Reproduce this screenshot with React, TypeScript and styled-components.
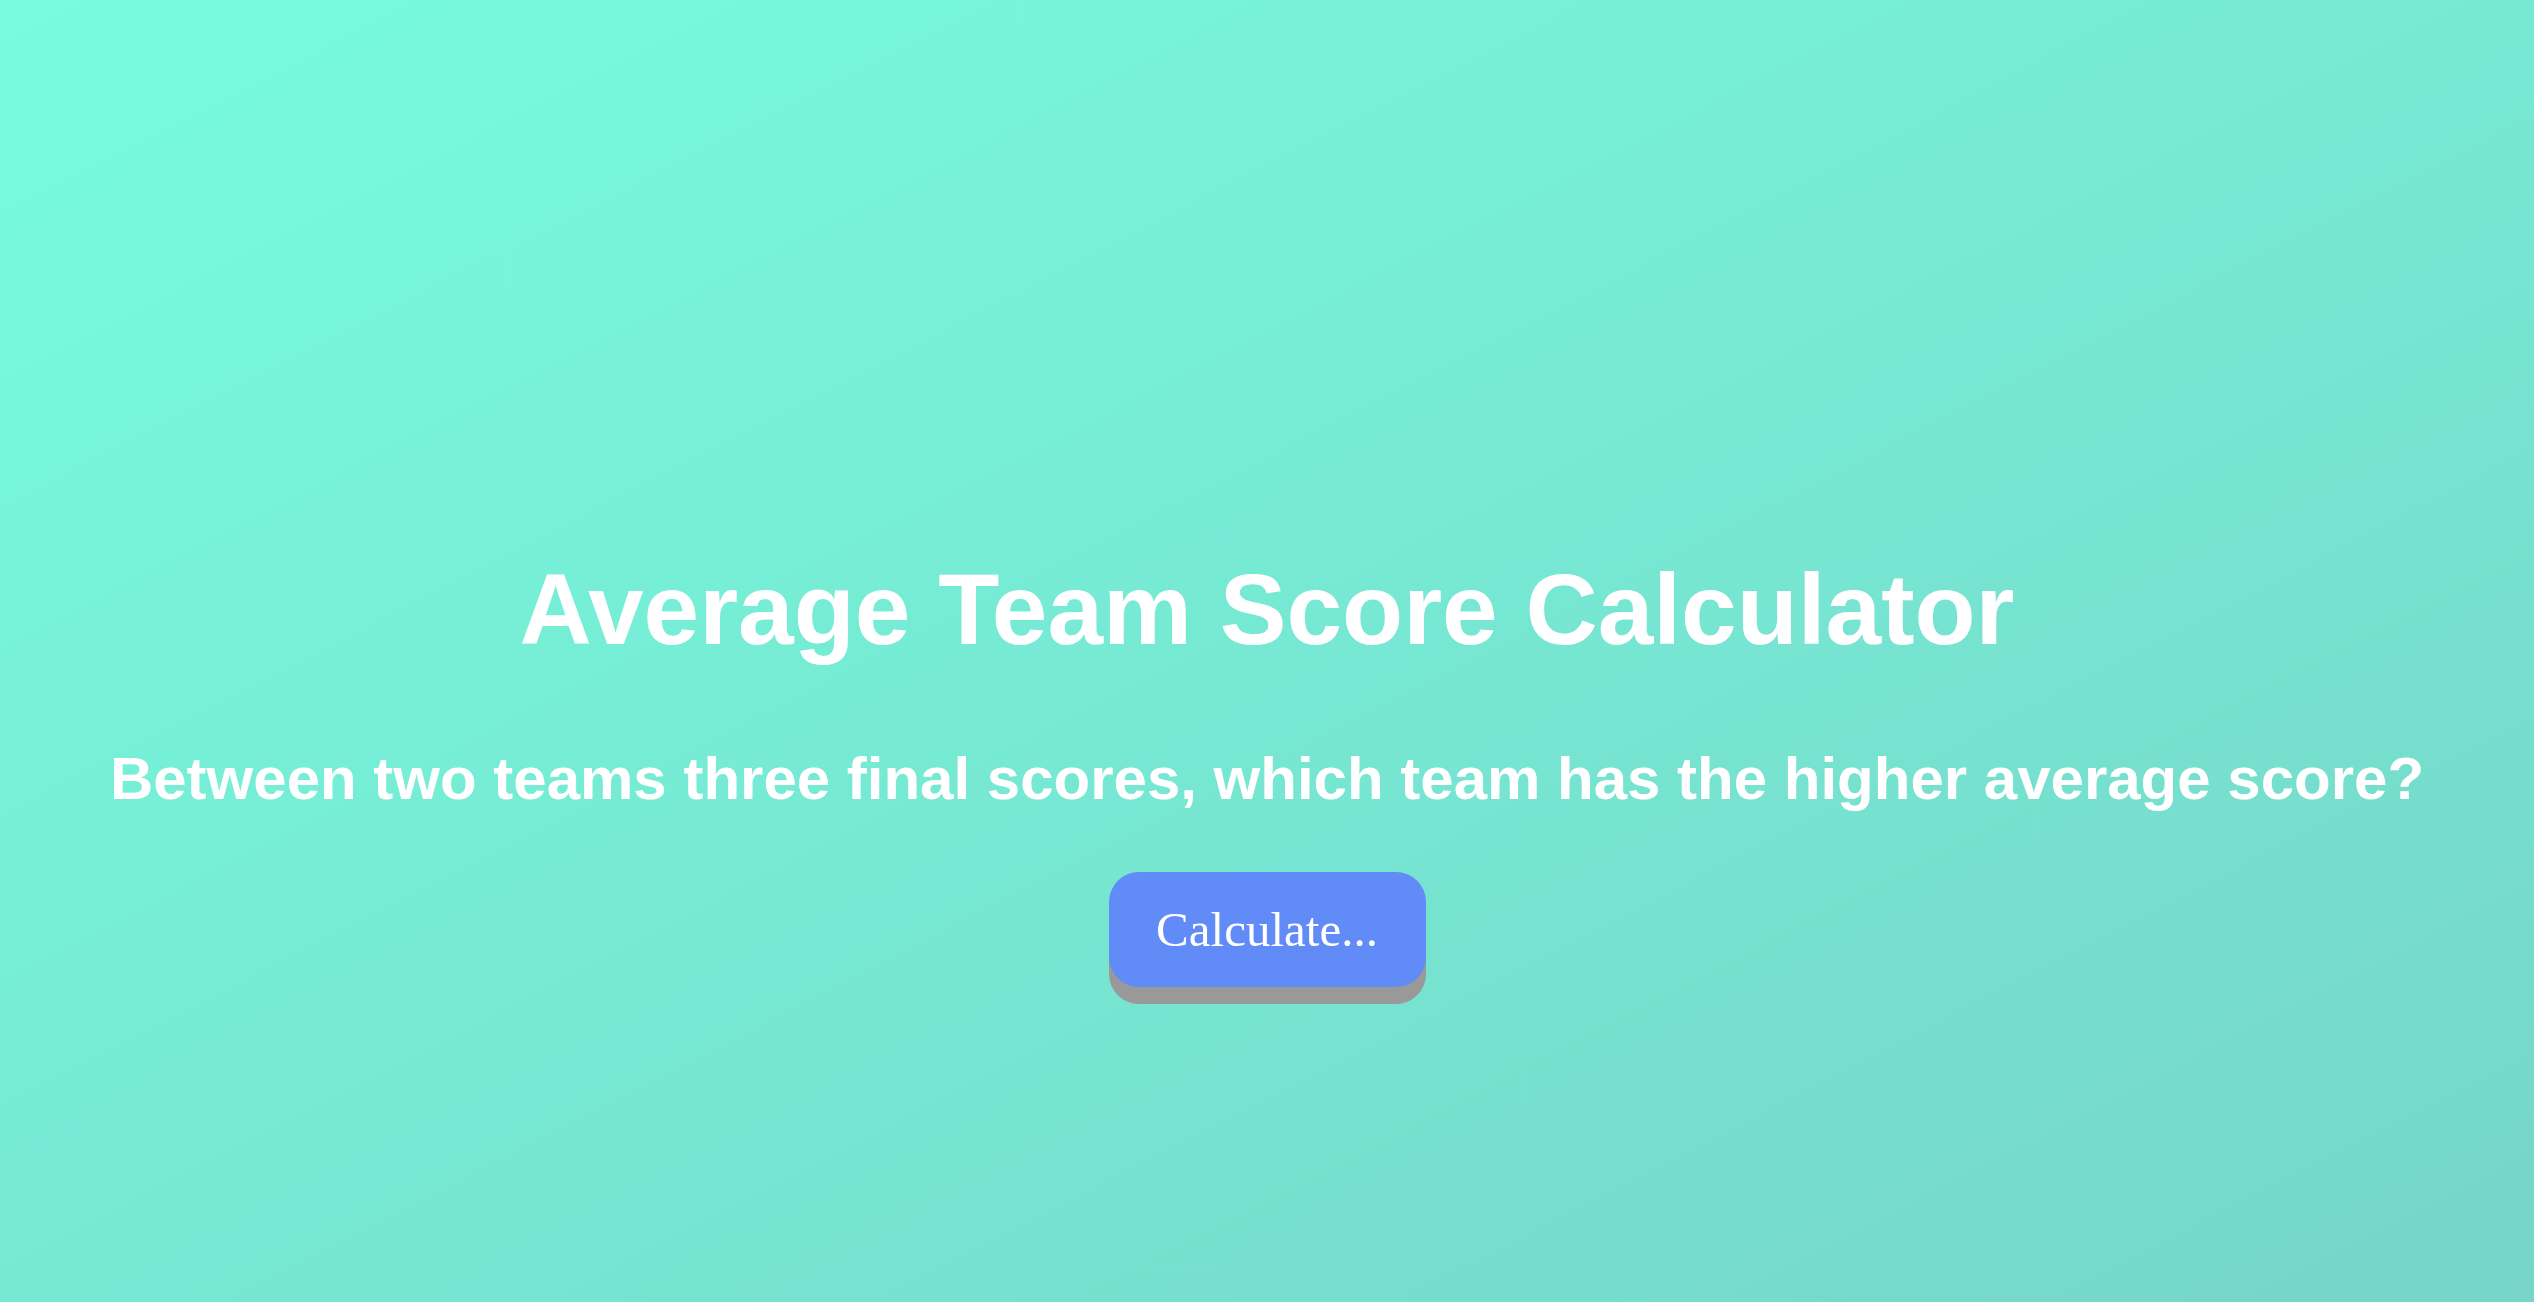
import React from "react";
import styled, { createGlobalStyle } from "styled-components";

const Global = createGlobalStyle`
  html, body { margin: 0; padding: 0; }
  body { font-family: "Liberation Serif", "Times New Roman", serif; }
`;

const Page = styled.main`
  box-sizing: border-box;
  min-height: 100vh;
  width: 100%;
  background: linear-gradient(to bottom right, #77fcdf, #76d5c7);
  display: flex;
  flex-direction: column;
  align-items: center;
  padding-top: 552px;
`;

const Title = styled.h1`
  margin: 0;
  color: #ffffff;
  font-family: "Liberation Sans", Arial, Helvetica, sans-serif;
  font-weight: 700;
  font-size: 100px;
  line-height: 1.15;
  text-align: center;
`;

const Subtitle = styled.h2`
  margin: 77px 0 0;
  color: #ffffff;
  font-family: "Liberation Sans", Arial, Helvetica, sans-serif;
  font-weight: 700;
  font-size: 60px;
  line-height: 1.15;
  text-align: center;
`;

const Button = styled.button`
  margin-top: 59px;
  width: 317px;
  height: 115px;
  border: none;
  border-radius: 30px;
  background: #618bf6;
  color: #ffffff;
  font-family: "Liberation Serif", "Times New Roman", serif;
  font-size: 49px;
  box-shadow: 0 17px 0 #999999;
  cursor: pointer;
`;

export default function App() {
  return (
    <Page>
      <Global />
      <Title>Average Team Score Calculator</Title>
      <Subtitle>Between two teams three final scores, which team has the higher average score?</Subtitle>
      <Button>Calculate...</Button>
    </Page>
  );
}
